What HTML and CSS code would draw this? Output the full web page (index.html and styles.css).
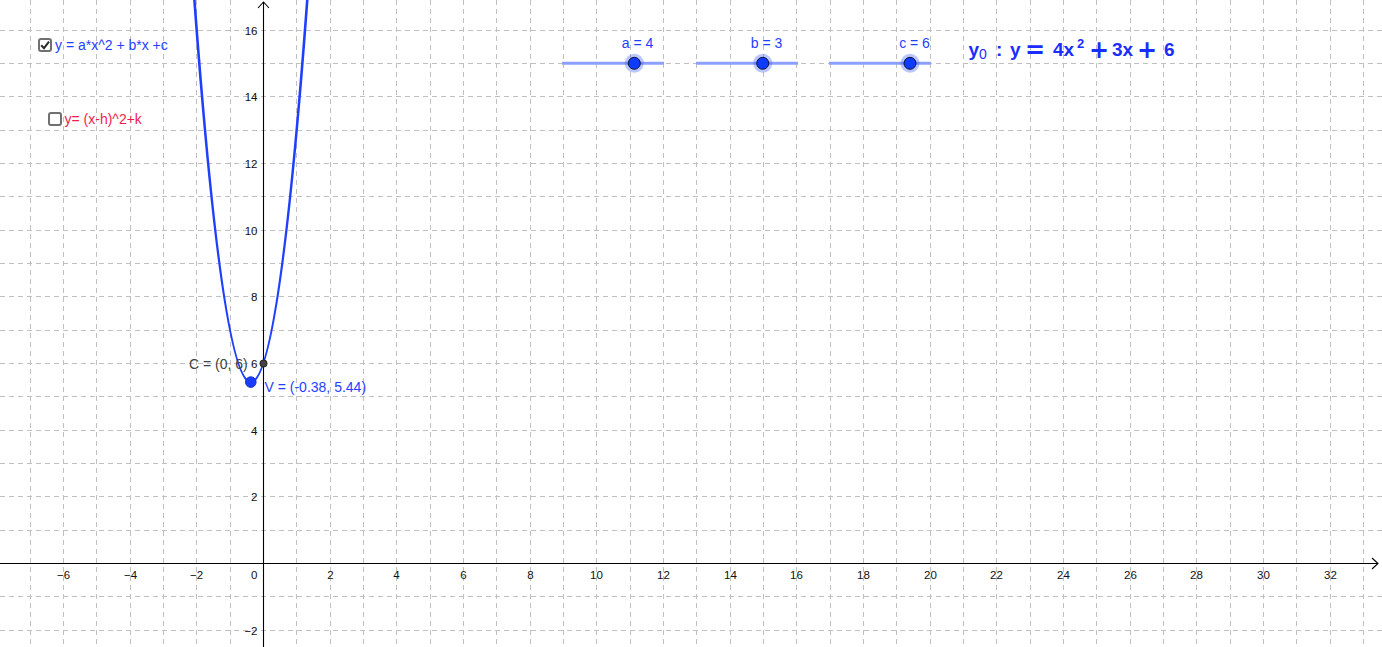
FILE: index.html
```html
<!DOCTYPE html>
<html lang="en">
<head>
<meta charset="utf-8">
<title>Quadratic function explorer</title>
<link rel="stylesheet" href="styles.css">
</head>
<body>
<div class="applet">
  <svg class="graph" width="1382" height="647" viewBox="0 0 1382 647" xmlns="http://www.w3.org/2000/svg">
    <path class="grid" d="M30.5 0V647M63.5 0V647M96.5 0V647M130.5 0V647M163.5 0V647M196.5 0V647M230.5 0V647M296.5 0V647M330.5 0V647M363.5 0V647M396.5 0V647M430.5 0V647M463.5 0V647M496.5 0V647M530.5 0V647M563.5 0V647M596.5 0V647M630.5 0V647M663.5 0V647M696.5 0V647M730.5 0V647M763.5 0V647M796.5 0V647M830.5 0V647M863.5 0V647M896.5 0V647M930.5 0V647M963.5 0V647M996.5 0V647M1030.5 0V647M1063.5 0V647M1096.5 0V647M1130.5 0V647M1163.5 0V647M1196.5 0V647M1230.5 0V647M1263.5 0V647M1296.5 0V647M1330.5 0V647M1363.5 0V647"/>
    <path class="grid" d="M0 30.5H1382M0 63.5H1382M0 96.5H1382M0 130.5H1382M0 163.5H1382M0 196.5H1382M0 230.5H1382M0 263.5H1382M0 296.5H1382M0 330.5H1382M0 363.5H1382M0 396.5H1382M0 430.5H1382M0 463.5H1382M0 496.5H1382M0 530.5H1382M0 596.5H1382M0 630.5H1382"/>

    <path class="axis" d="M0 563.5H1378M263.5 647V2"/>
    <path class="axis" d="M1372 558L1378 563.5L1372 569M258 8L263.5 2L269 8"/>

    <g class="ticks-x">
      <text x="63.5" y="579">−6</text>
      <text x="130.5" y="579">−4</text>
      <text x="196.5" y="579">−2</text>
      <text x="330.5" y="579">2</text>
      <text x="396.5" y="579">4</text>
      <text x="463.5" y="579">6</text>
      <text x="530.5" y="579">8</text>
      <text x="596.5" y="579">10</text>
      <text x="663.5" y="579">12</text>
      <text x="730.5" y="579">14</text>
      <text x="796.5" y="579">16</text>
      <text x="863.5" y="579">18</text>
      <text x="930.5" y="579">20</text>
      <text x="996.5" y="579">22</text>
      <text x="1063.5" y="579">24</text>
      <text x="1130.5" y="579">26</text>
      <text x="1196.5" y="579">28</text>
      <text x="1263.5" y="579">30</text>
      <text x="1330.5" y="579">32</text>
    </g>
    <g class="ticks-y">
      <text x="257.5" y="579">0</text>
      <text x="257.5" y="34.5">16</text>
      <text x="257.5" y="101">14</text>
      <text x="257.5" y="167.5">12</text>
      <text x="257.5" y="234.5">10</text>
      <text x="257.5" y="301">8</text>
      <text x="257.5" y="367.5">6</text>
      <text x="257.5" y="434.5">4</text>
      <text x="257.5" y="501">2</text>
      <text x="257.5" y="634.5">−2</text>
    </g>

    <path class="curve" d="M193.33 -14.67Q250.83 778.83 308.33 -14.67"/>

    <circle class="pt-c" cx="263.5" cy="363.5" r="3.6"/>
    <circle class="pt-v" cx="250.8" cy="382.1" r="5.3"/>
    <text class="lbl-c" x="189" y="369">C = (0, 6)</text>
    <text class="lbl-v" x="264.5" y="391.5">V = (-0.38, 5.44)</text>

    <g class="slider">
      <line class="track" x1="562" y1="63.3" x2="664" y2="63.3"/>
      <circle class="halo" cx="634.3" cy="63.3" r="9.5"/>
      <circle class="knob" cx="634.3" cy="63.3" r="6"/>
      <text class="slider-lbl" x="637.5" y="48">a = 4</text>
    </g>
    <g class="slider">
      <line class="track" x1="696" y1="63.3" x2="798" y2="63.3"/>
      <circle class="halo" cx="762.7" cy="63.3" r="9.5"/>
      <circle class="knob" cx="762.7" cy="63.3" r="6"/>
      <text class="slider-lbl" x="766.5" y="48">b = 3</text>
    </g>
    <g class="slider">
      <line class="track" x1="829" y1="63.3" x2="931" y2="63.3"/>
      <circle class="halo" cx="910" cy="63.3" r="9.5"/>
      <circle class="knob" cx="910" cy="63.3" r="6"/>
      <text class="slider-lbl" x="914.5" y="48">c = 6</text>
    </g>

    <text class="formula" y="56"><tspan x="968.5">y</tspan><tspan class="sub" x="979" dy="2.5">0</tspan><tspan x="996" dy="-2.5">:</tspan><tspan x="1010">y</tspan><tspan class="op" x="1025" dy="2">=</tspan><tspan x="1053" dy="-2">4x</tspan><tspan class="sup" x="1077" dy="-8.5">2</tspan><tspan class="op" x="1089" dy="10.5">+</tspan><tspan x="1112" dy="-2">3x</tspan><tspan class="op" x="1137" dy="2">+</tspan><tspan x="1164" dy="-2">6</tspan></text>
  </svg>

  <label class="toggle toggle-std">
    <span class="box">
      <svg class="check" width="10" height="10" viewBox="0 0 10 10"><path d="M1.2 5.2L4 8.2L9 1.6"/></svg>
    </span>
    <span class="toggle-text">y = a*x^2 + b*x +c</span>
  </label>
  <label class="toggle toggle-vertex">
    <span class="box"></span>
    <span class="toggle-text">y= (x-h)^2+k</span>
  </label>
</div>
</body>
</html>
```

FILE: styles.css
```css
html, body {
  margin: 0;
  padding: 0;
  background: #ffffff;
  overflow: hidden;
}

.applet {
  position: relative;
  width: 1382px;
  height: 647px;
  background: #ffffff;
  font-family: "Liberation Sans", Arial, sans-serif;
}

.graph {
  display: block;
}

.grid {
  fill: none;
  stroke: #c0c0c0;
  stroke-width: 1;
  stroke-dasharray: 5 4;
  shape-rendering: crispEdges;
}

.axis {
  fill: none;
  stroke: #000000;
  stroke-width: 1.1;
}

.ticks-x text,
.ticks-y text {
  font-family: "Liberation Sans", Arial, sans-serif;
  font-size: 11.5px;
  fill: #111111;
}

.ticks-x text {
  text-anchor: middle;
}

.ticks-y text {
  text-anchor: end;
}

.curve {
  fill: none;
  stroke: #1f3fff;
  stroke-width: 2.6;
}

.pt-c {
  fill: #444444;
  stroke: #222222;
  stroke-width: 1;
}

.pt-v {
  fill: #1a3cff;
  stroke: #1530c8;
  stroke-width: 1;
}

.lbl-c,
.lbl-v,
.slider-lbl {
  font-family: "Liberation Sans", Arial, sans-serif;
  font-size: 14px;
}

.lbl-c {
  fill: #404040;
}

.lbl-v {
  fill: #1f3fff;
}

.slider-lbl {
  fill: #1f3fff;
  text-anchor: middle;
}

.track {
  stroke: #8ea0ff;
  stroke-width: 3;
}

.halo {
  fill: rgba(40, 80, 255, 0.32);
}

.knob {
  fill: #0d3bff;
  stroke: #101030;
  stroke-width: 1;
}

.formula {
  font-family: "Liberation Sans", Arial, sans-serif;
  font-weight: bold;
  font-size: 19px;
  fill: #1a2cff;
}

.formula .sub {
  font-weight: normal;
  font-size: 14px;
}

.formula .sup {
  font-size: 13px;
}

.formula .op {
  font-family: "DejaVu Sans", sans-serif;
  font-size: 24px;
}

.toggle {
  position: absolute;
  display: flex;
  align-items: center;
  gap: 3px;
  font-family: "Liberation Sans", Arial, sans-serif;
  font-size: 14px;
  line-height: 16px;
  white-space: nowrap;
  cursor: pointer;
}

.toggle-std {
  left: 38px;
  top: 36.5px;
  color: #1f3fff;
}

.toggle-vertex {
  left: 47.5px;
  top: 111px;
  color: #f01c4c;
}

.box {
  width: 14px;
  height: 14px;
  box-sizing: border-box;
  border: 2px solid #707070;
  border-radius: 3px;
  background: #ffffff;
  display: flex;
  align-items: center;
  justify-content: center;
}

.check {
  display: block;
}

.check path {
  fill: none;
  stroke: #2a2a2a;
  stroke-width: 2;
}
```
